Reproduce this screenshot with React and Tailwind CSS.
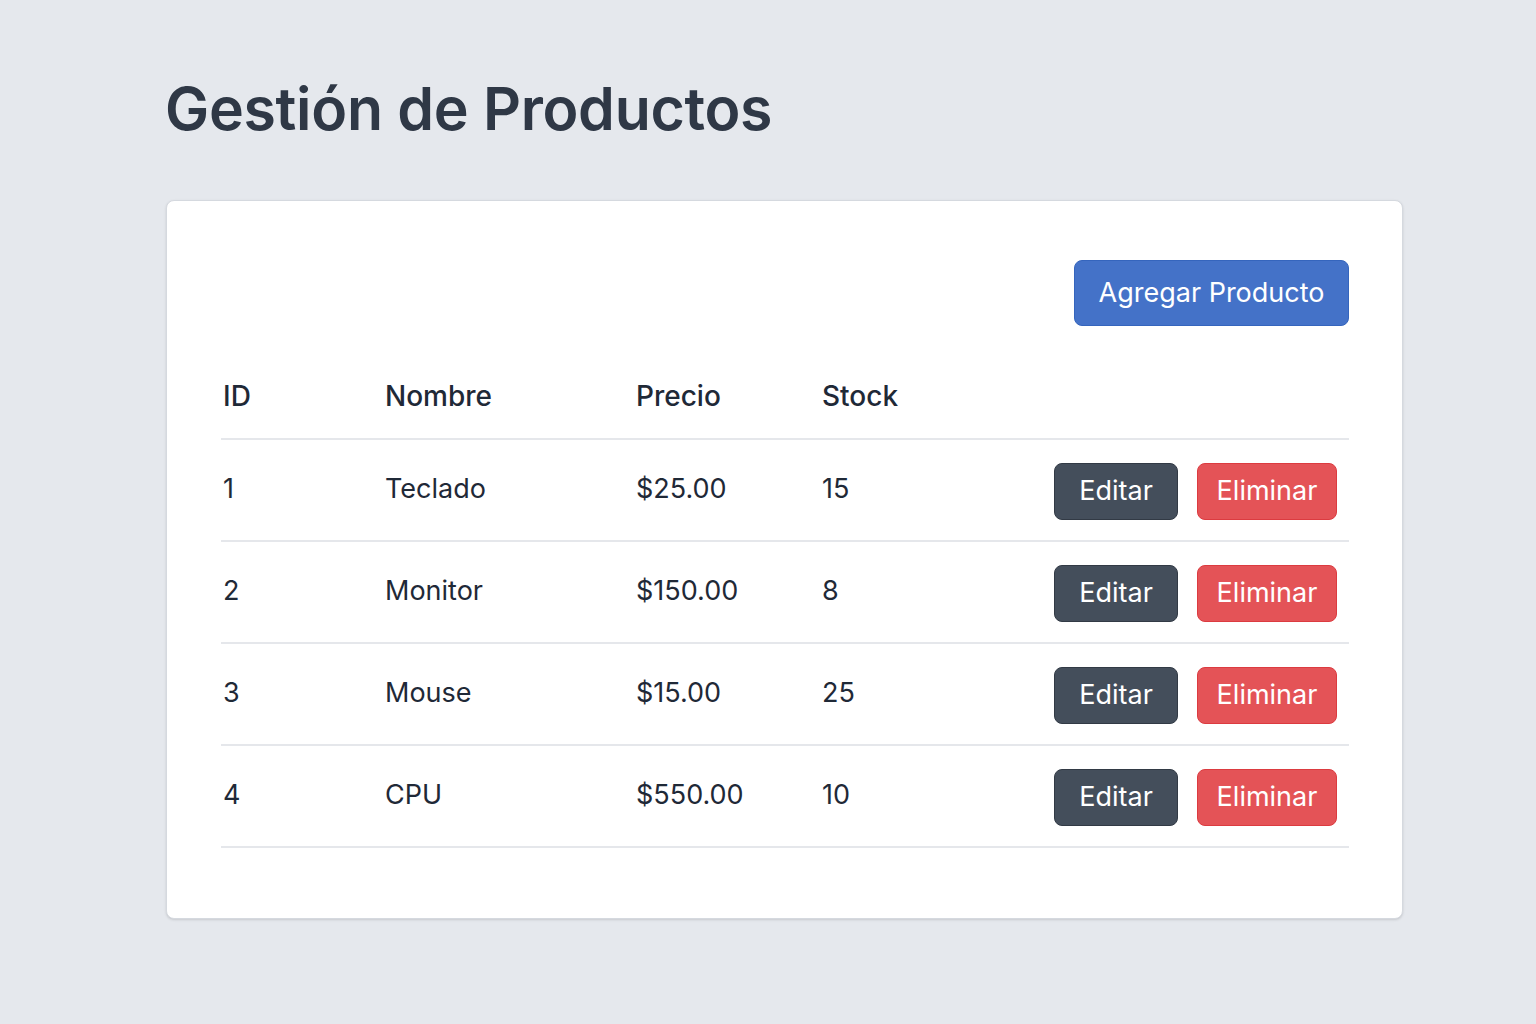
const products = [
  { id: 1, name: "Teclado", price: "$25.00", stock: 15 },
  { id: 2, name: "Monitor", price: "$150.00", stock: 8 },
  { id: 3, name: "Mouse", price: "$15.00", stock: 25 },
  { id: 4, name: "CPU", price: "$550.00", stock: 10 },
];

const cols = "grid grid-cols-[164px_251px_186px_1fr_auto] items-center";

const ProductRow = ({ product }) => (
  <div className={`${cols} h-[102px] border-b-2 border-gray-200 text-[27px] text-[#1f2937]`}>
    <div className="pl-[2px] -mt-[2px]">{product.id}</div>
    <div className="-mt-[2px]">{product.name}</div>
    <div className="-mt-[2px]">{product.price}</div>
    <div className="-mt-[2px]">{product.stock}</div>
    <div className="flex items-center gap-[19px] pr-[12px] pt-[2px]">
      <button className="w-[124px] h-[57px] rounded-lg bg-[#444e5b] border border-[#323a45] text-white text-[27px]">
        Editar
      </button>
      <button className="w-[140px] h-[57px] rounded-lg bg-[#e45357] border border-[#dc3b40] text-white text-[27px]">
        Eliminar
      </button>
    </div>
  </div>
);

export default function App() {
  return (
    <div className="min-h-screen bg-[#e5e8ed] font-['Inter',sans-serif] pt-[73px] pl-[166px] pr-[133px]">
      <h1 className="text-[59px] font-semibold text-[#2f3846] tracking-[-0.3px] leading-[72px] -ml-[1px]">
        Gestión de Productos
      </h1>

      <div className="mt-[55px] w-[1237px] h-[719px] bg-white rounded-lg border border-[#d5d9df] shadow-sm pt-[59px] pl-[54px] pr-[53px]">
        <div className="flex justify-end">
          <button className="w-[275px] h-[66px] rounded-lg bg-[#4472c8] border border-[#3565bd] text-white text-[27px]">
            Agregar Producto
          </button>
        </div>

        {/* Header */}
        <div className={`${cols} mt-[30px] h-[84px] pb-[2px] border-b-2 border-gray-200 text-[28px] font-medium text-[#1f2937]`}>
          <div className="pl-[2px]">ID</div>
          <div>Nombre</div>
          <div>Precio</div>
          <div>Stock</div>
          <div></div>
        </div>

        {products.map((p) => (
          <ProductRow key={p.id} product={p} />
        ))}
      </div>
    </div>
  );
}
